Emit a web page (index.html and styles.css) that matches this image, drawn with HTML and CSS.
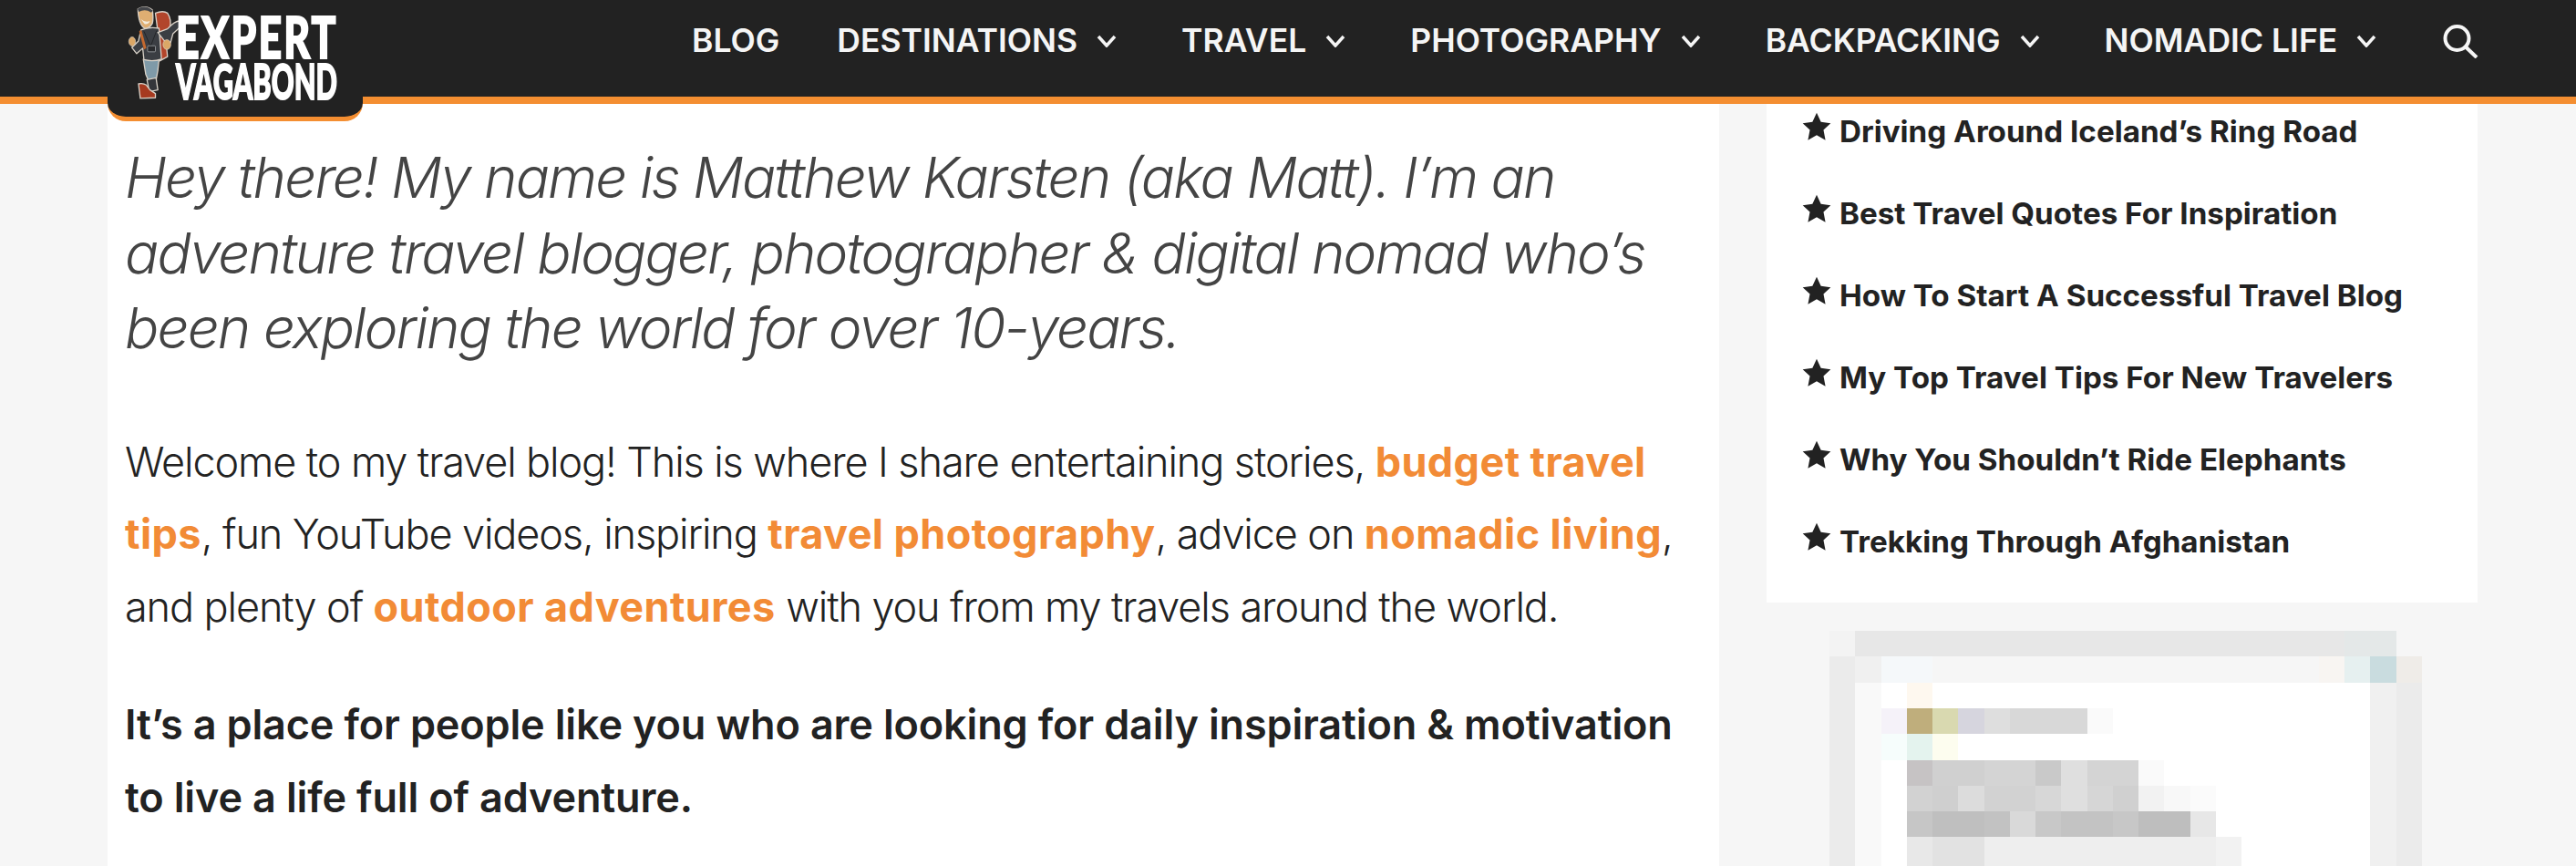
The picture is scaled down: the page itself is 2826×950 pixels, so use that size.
FILE: index.html
```html
<!DOCTYPE html>
<html lang="en">
<head>
    <meta charset="UTF-8">
    <meta name="viewport" content="width=device-width, initial-scale=1.0">
    <title>Expert Vagabond</title>
    <link rel="stylesheet" href="styles.css">
</head>
<body>
    <header class="site-header">
        <a class="logo" href="#">
            <!-- backpacker mascot -->
            <svg class="logo-figure" viewBox="0 0 190 320" aria-hidden="true">
                <g stroke="#d9d2c8" stroke-width="4" stroke-linejoin="round">
                    <path d="M92 24 Q118 14 132 24 Q146 46 140 70 L126 108 L132 168 L106 182 L102 100 Z" fill="#b2452b"/>
                    <path d="M52 176 L104 176 L100 214 L94 246 L70 250 L60 226 Z" fill="#7f9aa8"/>
                    <path d="M64 244 L94 238 L100 278 L72 284 Z" fill="#34363a"/>
                    <path d="M36 258 Q50 254 62 262 L74 278 L92 290 L92 304 L42 306 Z" fill="#a63a20"/>
                    <path d="M44 80 Q70 68 104 74 L112 176 Q84 186 54 178 L50 140 L30 158 L14 138 L36 116 Z" fill="#3b3e43"/>
                    <path d="M100 88 L132 76 Q156 50 172 50 Q184 56 176 68 L150 92 L142 122 L122 116 Z" fill="#3b3e43"/>
                    <path d="M34 10 Q62 -4 82 14 Q86 40 82 58 Q72 76 56 74 Q36 62 34 10 Z" fill="#dfae72"/>
                </g>
                <path d="M33 10 Q60 -6 84 16 L78 22 Q58 8 37 20 Z" fill="#44464a"/>
                <path d="M44 44 Q58 56 74 50 Q70 62 56 60 Z" fill="#f4ecdc"/>
                <path d="M38 84 L46 80 L62 140 L54 144 Z" fill="#c4692f"/>
                <path d="M54 84 L76 134 L96 82" fill="none" stroke="#17181a" stroke-width="2"/>
                <rect x="66" y="132" width="26" height="20" rx="3" fill="#2a2b2e" stroke="#b8bcc0" stroke-width="2"/>
                <ellipse cx="15" cy="118" rx="11" ry="15" fill="#dba766" stroke="#d9d2c8" stroke-width="2"/>
                <ellipse cx="130" cy="128" rx="13" ry="16" fill="#dba766" stroke="#d9d2c8" stroke-width="2"/>
            </svg>
            <span class="logo-text">
                <span class="logo-top">EXPERT</span>
                <span class="logo-bottom">VAGABOND</span>
            </span>
        </a>
        <nav class="main-nav">
            <a class="nav-link nav-blog" href="#">BLOG</a>
            <a class="nav-link" href="#">DESTINATIONS
                <svg class="chevron" viewBox="0 0 22 14"><polyline points="2,2 11,12 20,2"/></svg></a>
            <a class="nav-link" href="#">TRAVEL
                <svg class="chevron" viewBox="0 0 22 14"><polyline points="2,2 11,12 20,2"/></svg></a>
            <a class="nav-link" href="#">PHOTOGRAPHY
                <svg class="chevron" viewBox="0 0 22 14"><polyline points="2,2 11,12 20,2"/></svg></a>
            <a class="nav-link" href="#">BACKPACKING
                <svg class="chevron" viewBox="0 0 22 14"><polyline points="2,2 11,12 20,2"/></svg></a>
            <a class="nav-link" href="#">NOMADIC LIFE
                <svg class="chevron" viewBox="0 0 22 14"><polyline points="2,2 11,12 20,2"/></svg></a>
            <a class="nav-search" href="#">
                <svg viewBox="0 0 39 37"><circle cx="15.5" cy="15" r="13"/><line x1="25" y1="24.5" x2="37" y2="36"/></svg>
            </a>
        </nav>
    </header>

    <div class="page">
        <main class="content">
            <p class="intro">Hey there! My name is Matthew Karsten (aka Matt). I’m an adventure travel blogger, photographer &amp; digital nomad who’s been exploring the world for over 10-years.</p>
            <p class="body-text">Welcome to my travel blog! This is where I share entertaining stories, <a href="#">budget travel tips</a>, fun YouTube videos, inspiring <a href="#">travel photography</a>, advice on <a href="#">nomadic living</a>, and plenty of <a href="#">outdoor adventures</a> with you from my travels around the world.</p>
            <p class="body-text body-strong">It’s a place for people like you who are looking for daily inspiration &amp; motivation to live a life full of adventure.</p>
        </main>

        <aside class="sidebar">
            <ul class="top-posts">
                <li><svg class="star" viewBox="0 0 24 24"><path d="M12 .5l3.500 7.600 8 1-5.900 5.600 1.600 8.300L12 18.900 4.800 23l1.600-8.300L.5 9.100l8-1z"/></svg>Driving Around Iceland’s Ring Road</li>
                <li><svg class="star" viewBox="0 0 24 24"><path d="M12 .5l3.500 7.600 8 1-5.900 5.600 1.600 8.300L12 18.900 4.800 23l1.600-8.300L.5 9.100l8-1z"/></svg>Best Travel Quotes For Inspiration</li>
                <li><svg class="star" viewBox="0 0 24 24"><path d="M12 .5l3.500 7.600 8 1-5.900 5.600 1.600 8.300L12 18.900 4.800 23l1.600-8.300L.5 9.100l8-1z"/></svg>How To Start A Successful Travel Blog</li>
                <li><svg class="star" viewBox="0 0 24 24"><path d="M12 .5l3.500 7.600 8 1-5.900 5.600 1.600 8.300L12 18.900 4.800 23l1.600-8.300L.5 9.100l8-1z"/></svg>My Top Travel Tips For New Travelers</li>
                <li><svg class="star" viewBox="0 0 24 24"><path d="M12 .5l3.500 7.600 8 1-5.900 5.600 1.600 8.300L12 18.900 4.800 23l1.600-8.300L.5 9.100l8-1z"/></svg>Why You Shouldn’t Ride Elephants</li>
                <li><svg class="star" viewBox="0 0 24 24"><path d="M12 .5l3.500 7.600 8 1-5.900 5.600 1.600 8.300L12 18.900 4.800 23l1.600-8.300L.5 9.100l8-1z"/></svg>Trekking Through Afghanistan</li>
            </ul>

            <!-- pixelated screenshot, one unit is one mosaic block -->
            <svg class="mosaic" viewBox="0 0 23 10" shape-rendering="crispEdges" aria-hidden="true">
                <rect x="0" y="1" width="1" height="9" fill="#ebebeb"/>
                <rect x="1" y="1" width="1" height="9" fill="#f9f9f9"/>
                <rect x="2" y="1" width="19" height="9" fill="#ffffff"/>
                <rect x="21" y="2" width="1" height="8" fill="#f0f0f0"/>
                <rect x="22" y="1" width="1" height="9" fill="#ebebeb"/>
                <rect x="0" y="0" width="1" height="1" fill="#f3f3f3"/>
                <rect x="1" y="0" width="19" height="1" fill="#e7e7e7"/>
                <rect x="20" y="0" width="2" height="1" fill="#e4e8e8"/>
                <rect x="22" y="0" width="1" height="1" fill="#f6f6f6"/>
                <rect x="1" y="1" width="1" height="1" fill="#f0f0f0"/>
                <rect x="2" y="1" width="2" height="1" fill="#f5f8fa"/>
                <rect x="4" y="1" width="15" height="1" fill="#f6f6f6"/>
                <rect x="19" y="1" width="1" height="1" fill="#f8f5f2"/>
                <rect x="20" y="1" width="1" height="1" fill="#e6f0f0"/>
                <rect x="21" y="1" width="1" height="1" fill="#c9dcdf"/>
                <rect x="22" y="1" width="1" height="1" fill="#efece8"/>
                <rect x="3" y="2" width="1" height="1" fill="#fef8ef"/>
                <rect x="2" y="3" width="1" height="1" fill="#f5f2f9"/>
                <rect x="3" y="3" width="1" height="1" fill="#bfae7c"/>
                <rect x="4" y="3" width="1" height="1" fill="#d9d9b0"/>
                <rect x="5" y="3" width="1" height="1" fill="#d6d5de"/>
                <rect x="6" y="3" width="1" height="1" fill="#dedede"/>
                <rect x="7" y="3" width="3" height="1" fill="#d8d8d8"/>
                <rect x="10" y="3" width="1" height="1" fill="#fafafa"/>
                <rect x="2" y="4" width="1" height="1" fill="#f6fdfc"/>
                <rect x="3" y="4" width="1" height="1" fill="#e4f3ee"/>
                <rect x="4" y="4" width="1" height="1" fill="#fdfdef"/>
                <rect x="3" y="5" width="1" height="1" fill="#c6c3c4"/>
                <rect x="4" y="5" width="2" height="1" fill="#d0d0d0"/>
                <rect x="6" y="5" width="2" height="1" fill="#d4d4d4"/>
                <rect x="8" y="5" width="1" height="1" fill="#c9c9c9"/>
                <rect x="9" y="5" width="1" height="1" fill="#dfdfdf"/>
                <rect x="10" y="5" width="2" height="1" fill="#d4d4d4"/>
                <rect x="12" y="5" width="1" height="1" fill="#fafafa"/>
                <rect x="3" y="6" width="1" height="1" fill="#d2d2d2"/>
                <rect x="4" y="6" width="1" height="1" fill="#cfcfcf"/>
                <rect x="5" y="6" width="1" height="1" fill="#dcdcdc"/>
                <rect x="6" y="6" width="2" height="1" fill="#d2d2d2"/>
                <rect x="8" y="6" width="1" height="1" fill="#d7d7d7"/>
                <rect x="9" y="6" width="1" height="1" fill="#dfdfdf"/>
                <rect x="10" y="6" width="1" height="1" fill="#d6d6d6"/>
                <rect x="11" y="6" width="1" height="1" fill="#d0d0d0"/>
                <rect x="12" y="6" width="1" height="1" fill="#f2f2f2"/>
                <rect x="13" y="6" width="1" height="1" fill="#f8f8f8"/>
                <rect x="14" y="6" width="1" height="1" fill="#fbfbfb"/>
                <rect x="3" y="7" width="1" height="1" fill="#c6c6c6"/>
                <rect x="4" y="7" width="2" height="1" fill="#bfbfbf"/>
                <rect x="6" y="7" width="1" height="1" fill="#c2c2c2"/>
                <rect x="7" y="7" width="1" height="1" fill="#d9d9d9"/>
                <rect x="8" y="7" width="1" height="1" fill="#c8c8c8"/>
                <rect x="9" y="7" width="2" height="1" fill="#c3c3c3"/>
                <rect x="11" y="7" width="1" height="1" fill="#c7c7c7"/>
                <rect x="12" y="7" width="2" height="1" fill="#bebebe"/>
                <rect x="14" y="7" width="1" height="1" fill="#e7e7e7"/>
                <rect x="3" y="8" width="1" height="2" fill="#e8e8e8"/>
                <rect x="4" y="8" width="2" height="2" fill="#e2e2e2"/>
                <rect x="6" y="8" width="9" height="2" fill="#eeeeee"/>
                <rect x="15" y="8" width="1" height="2" fill="#f2f2f2"/>
            </svg>
        </aside>
    </div>
</body>
</html>
```

FILE: styles.css
```css
html, body {
    height: 100%;
}
body {
    margin: 0;
    background-color: #f6f6f6;
    font-family: Inter, "Liberation Sans", sans-serif;
    color: #222;
    overflow: hidden;
}
a {
    text-decoration: none;
}

/* header */
.site-header {
    display: flex;
    height: 106px;
    background-color: #222;
    border-bottom: 8px solid #f48e31;
}
.logo {
    display: flex;
    flex: none;
    align-self: flex-start;
    box-sizing: border-box;
    width: 280px;
    height: 133px;
    margin-left: 118px;
    padding: 6px 0 0 22px;
    background-color: #222;
    border-bottom: 5px solid #f48e31;
    border-radius: 0 0 20px 20px;
    position: relative;
}
.logo-figure {
    flex: none;
    width: 63px;
    height: 107px;
}
.logo-text {
    display: flex;
    flex-direction: column;
    margin-left: -10px;
    padding-top: 8px;
    color: #fff;
    font-family: Lato, sans-serif;
    font-weight: 900;
    -webkit-text-stroke: 2px #fff;
}
.logo-top {
    font-size: 62px;
    line-height: 52px;
    letter-spacing: 3px;
    transform: scaleX(.72);
    transform-origin: left;
    white-space: nowrap;
}
.logo-bottom {
    font-size: 54px;
    line-height: 46px;
    transform: scaleX(.57);
    transform-origin: left;
    white-space: nowrap;
}
.main-nav {
    display: flex;
    align-items: center;
    height: 90px;
    margin-left: 361px;
}
.nav-link {
    display: flex;
    align-items: center;
    gap: 21px;
    margin-right: 71px;
    color: #f5f5f5;
    font-size: 35.5px;
    font-weight: 600;
    line-height: 90px;
    white-space: nowrap;
}
.nav-blog {
    margin-right: 63px;
}
.chevron {
    width: 22px;
    height: 14px;
    fill: none;
    stroke: #f5f5f5;
    stroke-width: 3.5;
}
.nav-search {
    display: flex;
    margin-left: 2px;
}
.nav-search svg {
    width: 39px;
    height: 37px;
    fill: none;
    stroke: #f5f5f5;
    stroke-width: 4;
}

/* page columns */
.page {
    display: flex;
    gap: 52px;
    margin-left: 118px;
}
.content {
    box-sizing: border-box;
    flex: none;
    width: 1768px;
    height: 836px;
    padding: 40px 20px 0 19px;
    background-color: #fff;
}
.intro {
    margin: 0 0 65px;
    color: #444;
    font-size: 62px;
    font-style: italic;
    font-weight: 300;
    line-height: 82.5px;
    letter-spacing: -1.95px;
}
.body-text {
    margin: 0 0 50px;
    font-size: 45px;
    font-weight: 300;
    line-height: 79.5px;
    letter-spacing: -1.1px;
}
.body-text a {
    color: #f28b36;
    font-weight: 700;
    letter-spacing: .4px;
}
.body-strong {
    font-weight: 600;
    letter-spacing: -.15px;
}

/* sidebar */
.sidebar {
    flex: none;
    width: 780px;
}
.top-posts {
    margin: 0;
    padding: 0 0 7px 39px;
    background-color: #fff;
    list-style: none;
}
.top-posts li {
    display: flex;
    align-items: flex-start;
    gap: 9px;
    height: 90px;
    font-size: 33.2px;
    font-weight: 700;
    line-height: 60px;
}
.star {
    flex: none;
    width: 32px;
    height: 32px;
    margin-top: 9px;
    fill: #222;
}
.mosaic {
    display: block;
    width: 650px;
    height: 285px;
    margin: 30px 0 0 69px;
    filter: blur(.5px);
}
```
